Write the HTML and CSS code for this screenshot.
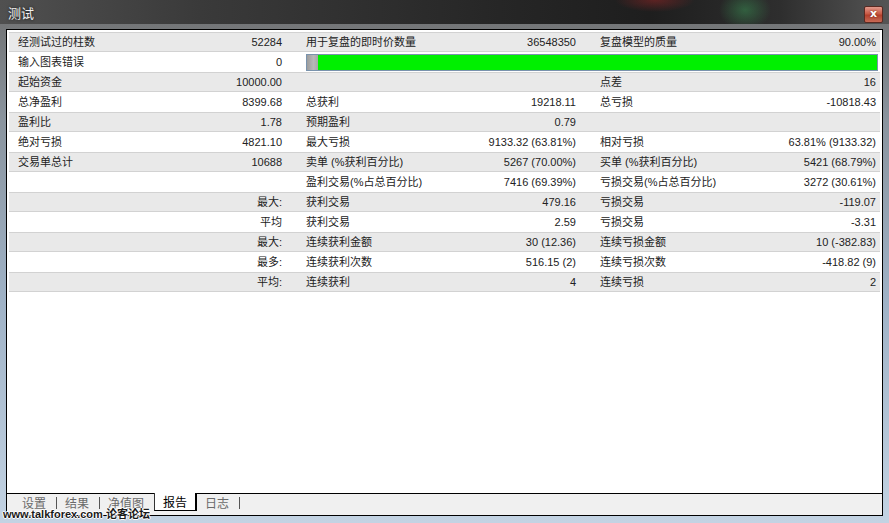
FILE: index.html
```html
<!DOCTYPE html>
<html lang="zh-CN">
<head>
<meta charset="utf-8">
<title>测试</title>
<link rel="stylesheet" href="styles.css">
</head>
<body>
<div class="window">
  <div class="titlebar">
    <span class="title">测试</span>
    <span class="close">x</span>
  </div>
  <div class="frame">
    <div class="panel">
      <div class="content">
        <div class="row alt">
          <div class="cell"><span>经测试过的柱数</span><span>52284</span></div>
          <div class="cell"><span>用于复盘的即时价数量</span><span>36548350</span></div>
          <div class="cell"><span>复盘模型的质量</span><span>90.00%</span></div>
        </div>
        <div class="row">
          <div class="cell"><span>输入图表错误</span><span>0</span></div>
          <div class="cell span2"><div class="bar"><div class="bar-grey"></div><div class="bar-green"></div></div></div>
        </div>
        <div class="row alt">
          <div class="cell"><span>起始资金</span><span>10000.00</span></div>
          <div class="cell"></div>
          <div class="cell"><span>点差</span><span>16</span></div>
        </div>
        <div class="row">
          <div class="cell"><span>总净盈利</span><span>8399.68</span></div>
          <div class="cell"><span>总获利</span><span>19218.11</span></div>
          <div class="cell"><span>总亏损</span><span>-10818.43</span></div>
        </div>
        <div class="row alt">
          <div class="cell"><span>盈利比</span><span>1.78</span></div>
          <div class="cell"><span>预期盈利</span><span>0.79</span></div>
          <div class="cell"></div>
        </div>
        <div class="row">
          <div class="cell"><span>绝对亏损</span><span>4821.10</span></div>
          <div class="cell"><span>最大亏损</span><span>9133.32 (63.81%)</span></div>
          <div class="cell"><span>相对亏损</span><span>63.81% (9133.32)</span></div>
        </div>
        <div class="row alt">
          <div class="cell"><span>交易单总计</span><span>10688</span></div>
          <div class="cell"><span>卖单 (%获利百分比)</span><span>5267 (70.00%)</span></div>
          <div class="cell"><span>买单 (%获利百分比)</span><span>5421 (68.79%)</span></div>
        </div>
        <div class="row">
          <div class="cell"></div>
          <div class="cell"><span>盈利交易(%占总百分比)</span><span>7416 (69.39%)</span></div>
          <div class="cell"><span>亏损交易(%占总百分比)</span><span>3272 (30.61%)</span></div>
        </div>
        <div class="row alt">
          <div class="cell end"><span>最大:</span></div>
          <div class="cell"><span>获利交易</span><span>479.16</span></div>
          <div class="cell"><span>亏损交易</span><span>-119.07</span></div>
        </div>
        <div class="row">
          <div class="cell end"><span>平均</span></div>
          <div class="cell"><span>获利交易</span><span>2.59</span></div>
          <div class="cell"><span>亏损交易</span><span>-3.31</span></div>
        </div>
        <div class="row alt">
          <div class="cell end"><span>最大:</span></div>
          <div class="cell"><span>连续获利金额</span><span>30 (12.36)</span></div>
          <div class="cell"><span>连续亏损金额</span><span>10 (-382.83)</span></div>
        </div>
        <div class="row">
          <div class="cell end"><span>最多:</span></div>
          <div class="cell"><span>连续获利次数</span><span>516.15 (2)</span></div>
          <div class="cell"><span>连续亏损次数</span><span>-418.82 (9)</span></div>
        </div>
        <div class="row alt">
          <div class="cell end"><span>平均:</span></div>
          <div class="cell"><span>连续获利</span><span>4</span></div>
          <div class="cell"><span>连续亏损</span><span>2</span></div>
        </div>
      </div>
      <div class="tabs">
        <span class="tab">设置</span><span class="sep"></span>
        <span class="tab">结果</span><span class="sep"></span>
        <span class="tab">净值图</span>
        <span class="tab active">报告</span>
        <span class="tab">日志</span><span class="sep"></span>
      </div>
    </div>
  </div>
  <div class="watermark">www.talkforex.com 论客论坛</div>
</div>
</body>
</html>
```

FILE: styles.css
```css
* { box-sizing: border-box; }

html, body {
  margin: 0;
  padding: 0;
}

body {
  width: 889px;
  height: 523px;
  overflow: hidden;
  font-family: "Liberation Sans", "Noto Sans CJK SC", sans-serif;
  font-size: 11px;
  color: #222;
}

.window {
  position: relative;
  width: 889px;
  height: 523px;
  display: flex;
  flex-direction: column;
  background: linear-gradient(to bottom, #6e6e6e 0px, #8a949e 120px, #9fb2c6 300px, #c3d3e3 100%);
}

.titlebar {
  height: 24px;
  display: flex;
  align-items: center;
  padding: 0 6px 0 8px;
  background:
    radial-gradient(ellipse 40px 12px at 655px 0px, rgba(170, 40, 40, 0.45), rgba(170, 40, 40, 0) 100%),
    radial-gradient(ellipse 26px 20px at 745px 10px, rgba(60, 160, 90, 0.45), rgba(60, 160, 90, 0) 100%),
    linear-gradient(to right, #505050 0px, #3a3a3a 200px, #262626 500px, #1e1e1e 650px, #2e2e2e 780px, #555 889px);
}

.title {
  color: #f2f2f2;
  font-family: "Noto Sans CJK SC", sans-serif;
  font-size: 13px;
  text-shadow: 0 0 3px rgba(0, 0, 0, 0.8);
}

.close {
  margin-left: auto;
  margin-top: 4px;
  width: 19px;
  height: 17px;
  border: 1px solid #5a2a22;
  border-radius: 2px;
  background: linear-gradient(to bottom, #e29a8c 0%, #c95a45 45%, #b2402c 55%, #c86a55 100%);
  color: #fff;
  font-family: "DejaVu Sans", sans-serif;
  font-weight: bold;
  font-size: 11px;
  line-height: 14px;
  text-align: center;
  text-shadow: 0 0 2px #6a1a10;
}

.frame {
  flex: 1;
  padding: 5px 6px 7px 6px;
  display: flex;
}

.panel {
  flex: 1;
  border: 1px solid #000;
  display: flex;
  flex-direction: column;
  background: #fff;
}

.content {
  flex: 1;
  padding: 2px 2px 0 2px;
  border-bottom: 1px solid #000;
  background: #fff;
}

.row {
  height: 20px;
  display: grid;
  grid-template-columns: 264px 270px 1fr;
  column-gap: 24px;
  padding: 0 4px 0 9px;
  align-items: center;
}

.row.alt {
  background: #e9e9e9;
  border-top: 1px solid #d2d2d2;
  border-bottom: 1px solid #d2d2d2;
}

.cell {
  display: flex;
  justify-content: space-between;
  align-items: center;
  white-space: nowrap;
  line-height: 18px;
}

.cell.end {
  justify-content: flex-end;
}

.cell.span2 {
  grid-column: 2 / 4;
  margin-right: -2px;
}

.bar {
  width: 100%;
  height: 17px;
  border: 1px solid #7a93ad;
  display: flex;
  background: #00ee00;
}

.bar-grey {
  width: 11px;
  background: linear-gradient(to right, #9c9c9c, #b8b8b8 60%, #a6a6a6);
}

.bar-green {
  flex: 1;
  background: #00f000;
}

.tabs {
  height: 21px;
  background: #f0f0f0;
  display: flex;
  align-items: flex-start;
  padding-left: 7px;
  font-family: "Noto Sans CJK SC", sans-serif;
  font-size: 12px;
  color: #6a6a6a;
}

.tab {
  padding: 0 10px 0 8px;
  height: 17px;
  line-height: 17px;
}

.sep {
  width: 1px;
  height: 12px;
  margin-top: 3px;
  background: #555;
}

.tab.active {
  margin-top: -1px;
  height: 18px;
  line-height: 18px;
  padding: 0 8px 0 8px;
  background: #fff;
  color: #000;
  border-left: 1px solid #333;
  border-right: 2px solid #000;
  border-bottom: 1px solid #000;
}

.watermark {
  position: absolute;
  left: 3px;
  top: 505px;
  font-family: "Liberation Sans", "Noto Sans CJK SC", sans-serif;
  font-size: 11px;
  font-weight: bold;
  color: #1a1a1a;
  text-shadow: 1px 0 0 #fff, -1px 0 0 #fff, 0 1px 0 #fff, 0 -1px 0 #fff;
  white-space: nowrap;
}
```
